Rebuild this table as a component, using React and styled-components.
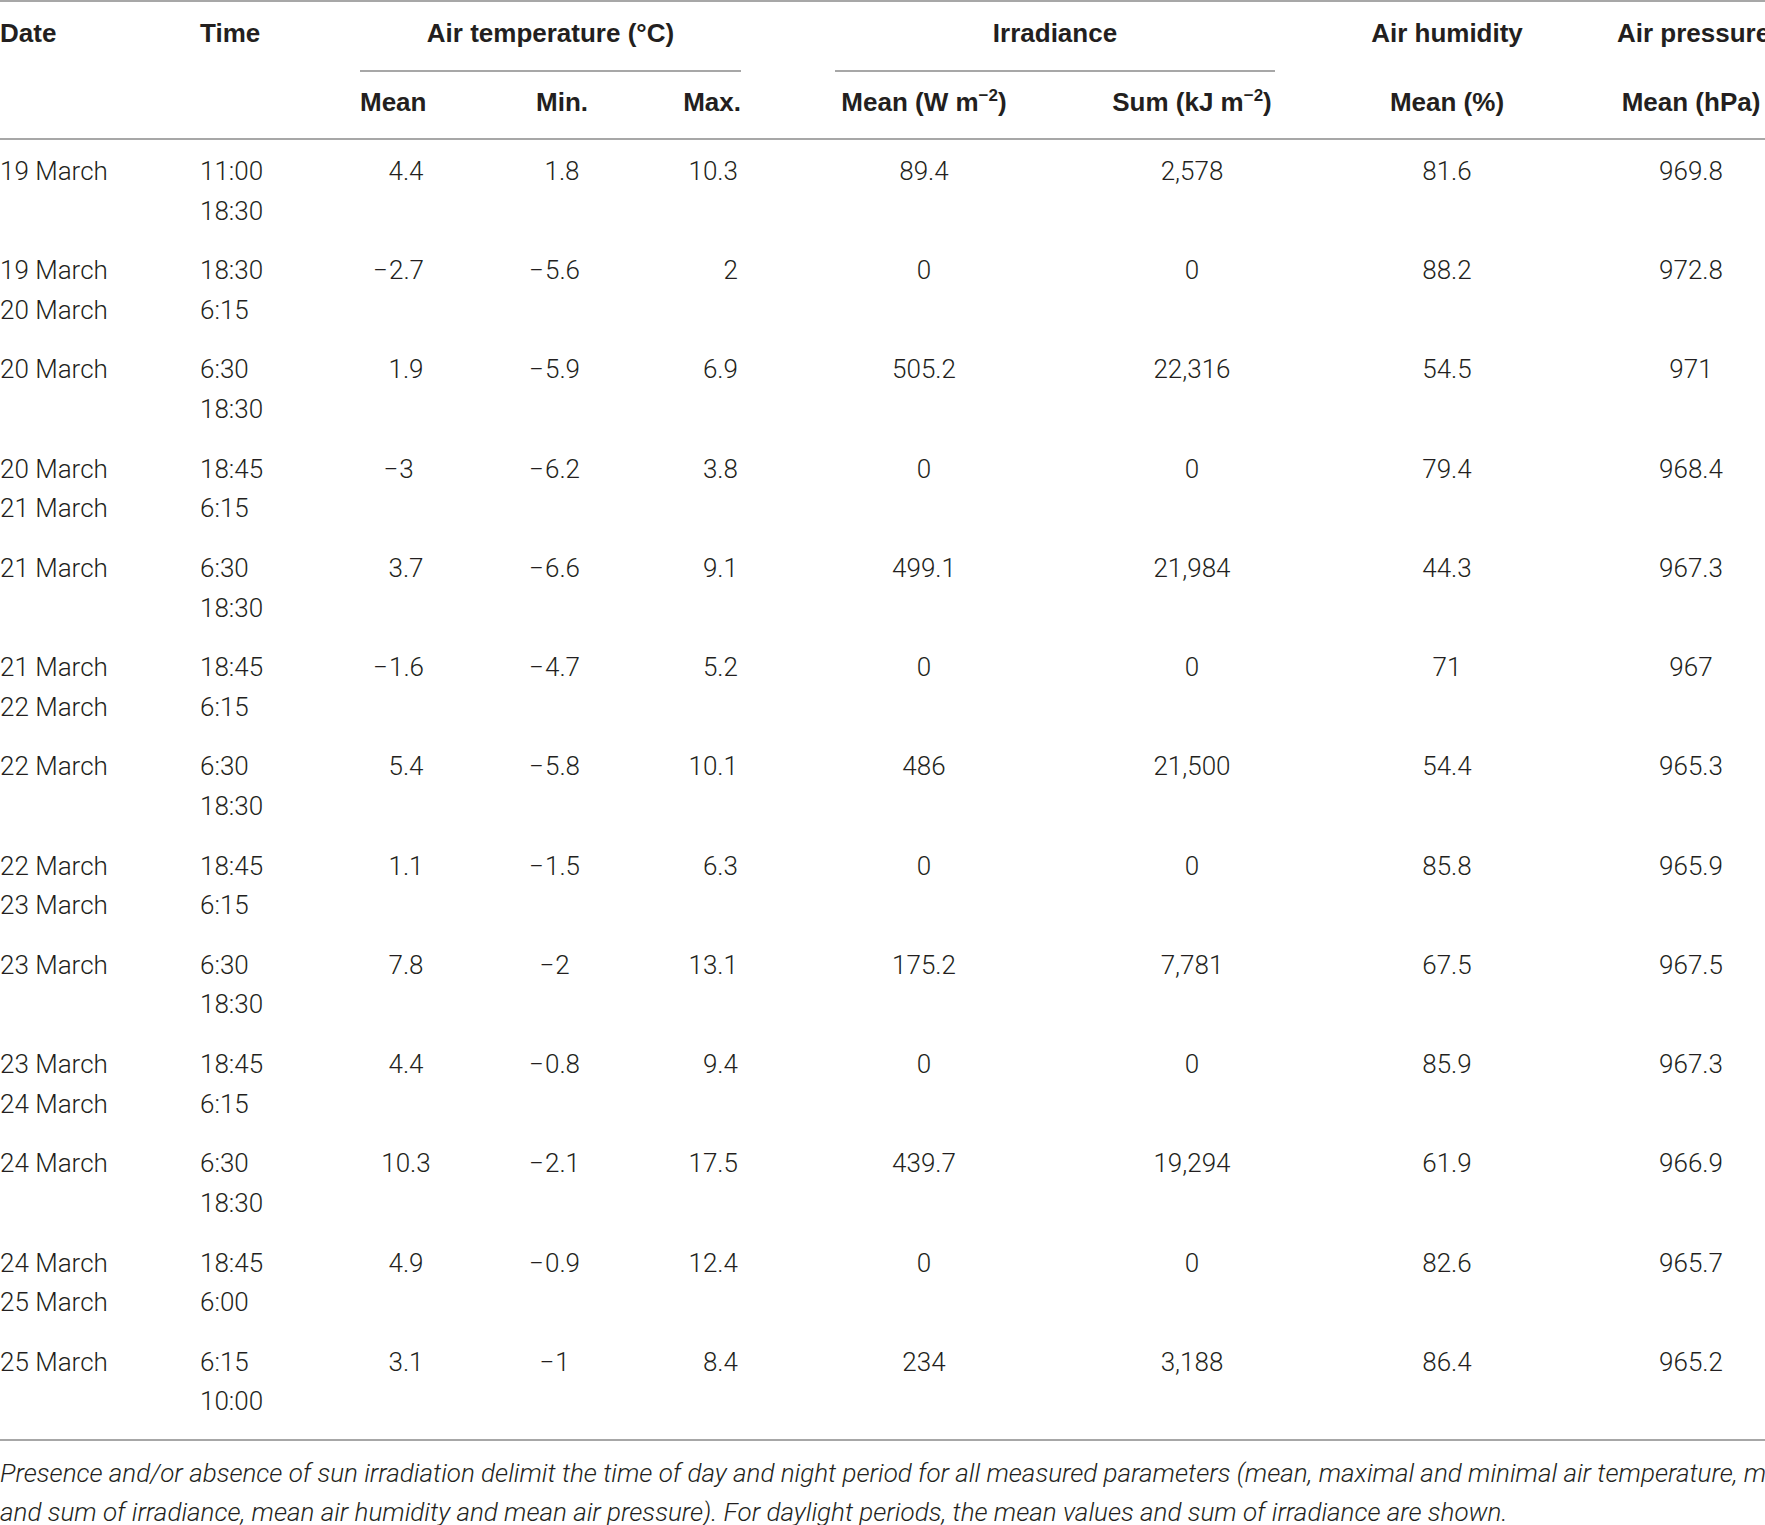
import React from 'react'
import styled, { createGlobalStyle } from 'styled-components'

const COLS = '200px 160px 92px 220px 69px 366px 170px 340px 148px'

const rows = [
    { date: ['19 March'], time: ['11:00', '18:30'], t: ['4.4', '1.8', '10.3'], irr: ['89.4', '2,578'], hum: '81.6', pres: '969.8' },
    { date: ['19 March', '20 March'], time: ['18:30', '6:15'], t: ['-2.7', '-5.6', '2'], irr: ['0', '0'], hum: '88.2', pres: '972.8' },
    { date: ['20 March'], time: ['6:30', '18:30'], t: ['1.9', '-5.9', '6.9'], irr: ['505.2', '22,316'], hum: '54.5', pres: '971' },
    { date: ['20 March', '21 March'], time: ['18:45', '6:15'], t: ['-3', '-6.2', '3.8'], irr: ['0', '0'], hum: '79.4', pres: '968.4' },
    { date: ['21 March'], time: ['6:30', '18:30'], t: ['3.7', '-6.6', '9.1'], irr: ['499.1', '21,984'], hum: '44.3', pres: '967.3' },
    { date: ['21 March', '22 March'], time: ['18:45', '6:15'], t: ['-1.6', '-4.7', '5.2'], irr: ['0', '0'], hum: '71', pres: '967' },
    { date: ['22 March'], time: ['6:30', '18:30'], t: ['5.4', '-5.8', '10.1'], irr: ['486', '21,500'], hum: '54.4', pres: '965.3' },
    { date: ['22 March', '23 March'], time: ['18:45', '6:15'], t: ['1.1', '-1.5', '6.3'], irr: ['0', '0'], hum: '85.8', pres: '965.9' },
    { date: ['23 March'], time: ['6:30', '18:30'], t: ['7.8', '-2', '13.1'], irr: ['175.2', '7,781'], hum: '67.5', pres: '967.5' },
    { date: ['23 March', '24 March'], time: ['18:45', '6:15'], t: ['4.4', '-0.8', '9.4'], irr: ['0', '0'], hum: '85.9', pres: '967.3' },
    { date: ['24 March'], time: ['6:30', '18:30'], t: ['10.3', '-2.1', '17.5'], irr: ['439.7', '19,294'], hum: '61.9', pres: '966.9' },
    { date: ['24 March', '25 March'], time: ['18:45', '6:00'], t: ['4.9', '-0.9', '12.4'], irr: ['0', '0'], hum: '82.6', pres: '965.7' },
    { date: ['25 March'], time: ['6:15', '10:00'], t: ['3.1', '-1', '8.4'], irr: ['234', '3,188'], hum: '86.4', pres: '965.2' },
]

// minus hangs to the left so the digits stay centred like the print layout
function Num({ value }) {
    if (value.startsWith('-')) {
        return <><Minus>−</Minus>{value.slice(1)}</>
    }
    return value
}

function App() {
    return (
        <>
            <GlobalStyle />
            <Page>
                <Rule />
                <HeadRow>
                    <HeadCell>Date</HeadCell>
                    <HeadCell>Time</HeadCell>
                    <Group $span={3}>
                        <HeadCell $align="center">Air temperature (°C)</HeadCell>
                        <SubRule />
                    </Group>
                    <Group $span={2} $inset={94}>
                        <HeadCell $align="center">Irradiance</HeadCell>
                        <SubRule />
                    </Group>
                    <HeadCell $align="center">Air humidity</HeadCell>
                    <HeadCell>Air pressure</HeadCell>
                </HeadRow>
                <SubHeadRow>
                    <HeadCell />
                    <HeadCell />
                    <HeadCell>Mean</HeadCell>
                    <HeadCell $align="center">Min.</HeadCell>
                    <HeadCell $align="right">Max.</HeadCell>
                    <HeadCell $align="center">Mean (W m<sup>−2</sup>)</HeadCell>
                    <HeadCell $align="center">Sum (kJ m<sup>−2</sup>)</HeadCell>
                    <HeadCell $align="center">Mean (%)</HeadCell>
                    <HeadCell $align="center">Mean (hPa)</HeadCell>
                </SubHeadRow>
                <Rule />
                <Body>
                    {rows.map((r, i) => (
                        <Row key={i}>
                            <Cell>{r.date.map((d) => <Line key={d}>{d}</Line>)}</Cell>
                            <Cell>{r.time.map((t) => <Line key={t}>{t}</Line>)}</Cell>
                            <Cell $align="center"><Num value={r.t[0]} /></Cell>
                            <Cell $align="center"><Num value={r.t[1]} /></Cell>
                            <Cell $align="right">{r.t[2]}</Cell>
                            <Cell $align="center">{r.irr[0]}</Cell>
                            <Cell $align="center">{r.irr[1]}</Cell>
                            <Cell $align="center">{r.hum}</Cell>
                            <Cell $align="center">{r.pres}</Cell>
                        </Row>
                    ))}
                </Body>
                <Rule />
                <Note>
                    Presence and/or absence of sun irradiation delimit the time of day and night period for all measured parameters (mean, maximal and minimal air temperature, mean
                    <br />
                    and sum of irradiance, mean air humidity and mean air pressure). For daylight periods, the mean values and sum of irradiance are shown.
                </Note>
            </Page>
        </>
    )
}

const GlobalStyle = createGlobalStyle`
    html, body {
        margin: 0;
        padding: 0;
        background: #fff;
        overflow: hidden;
    }
`;

const Page = styled.div`
    width: 1765px;
    font-family: Roboto, "Liberation Sans", sans-serif;
    color: #231f20;
`;

const Rule = styled.div`
    height: 2px;
    background: #a7a7a7;
`;

const HeadRow = styled.div`
    display: grid;
    grid-template-columns: ${COLS};
    align-items: start;
`;

const SubHeadRow = styled(HeadRow)`
    padding: 10px 0 16px;
`;

const HeadCell = styled.div`
    font-family: "Liberation Sans", Arial, sans-serif;
    font-weight: 700;
    font-size: 26px;
    line-height: 40px;
    white-space: nowrap;
    text-align: ${(p) => p.$align || 'left'};
    ${HeadRow}:not(${SubHeadRow}) > & {
        padding-top: 11px;
    }

    sup {
        font-size: 17px;
        line-height: 0;
        vertical-align: 10px;
    }
`;

const Group = styled.div`
    grid-column: span ${(p) => p.$span};
    margin-left: ${(p) => p.$inset || 0}px;
    margin-right: ${(p) => (p.$inset ? 2 : 0)}px;

    ${HeadCell} {
        padding-top: 11px;
    }
`;

const SubRule = styled.div`
    height: 2px;
    margin-top: 17px;
    background: #a7a7a7;
`;

const Body = styled.div`
    padding-top: 1px;
    padding-bottom: 8px;
`;

const Row = styled.div`
    display: grid;
    grid-template-columns: ${COLS};
    padding: 11px 0 9.05px;
    min-height: 79.2px;
    align-items: start;
`;

const Cell = styled.div`
    font-weight: 300;
    font-size: 26px;
    line-height: 39.6px;
    white-space: nowrap;
    text-align: ${(p) => p.$align || 'left'};
    padding-right: ${(p) => (p.$align === 'right' ? 3 : 0)}px;
`;

const Line = styled.div``;

const Minus = styled.span`
    display: inline-block;
    width: 0.6em;
    margin-left: -0.6em;
    text-align: right;
    padding-right: 1px;
`;

const Note = styled.p`
    margin: 0;
    padding-top: 13px;
    font-size: 26px;
    line-height: 39px;
    font-style: italic;
    font-weight: 300;
    white-space: nowrap;
`;

export default App
